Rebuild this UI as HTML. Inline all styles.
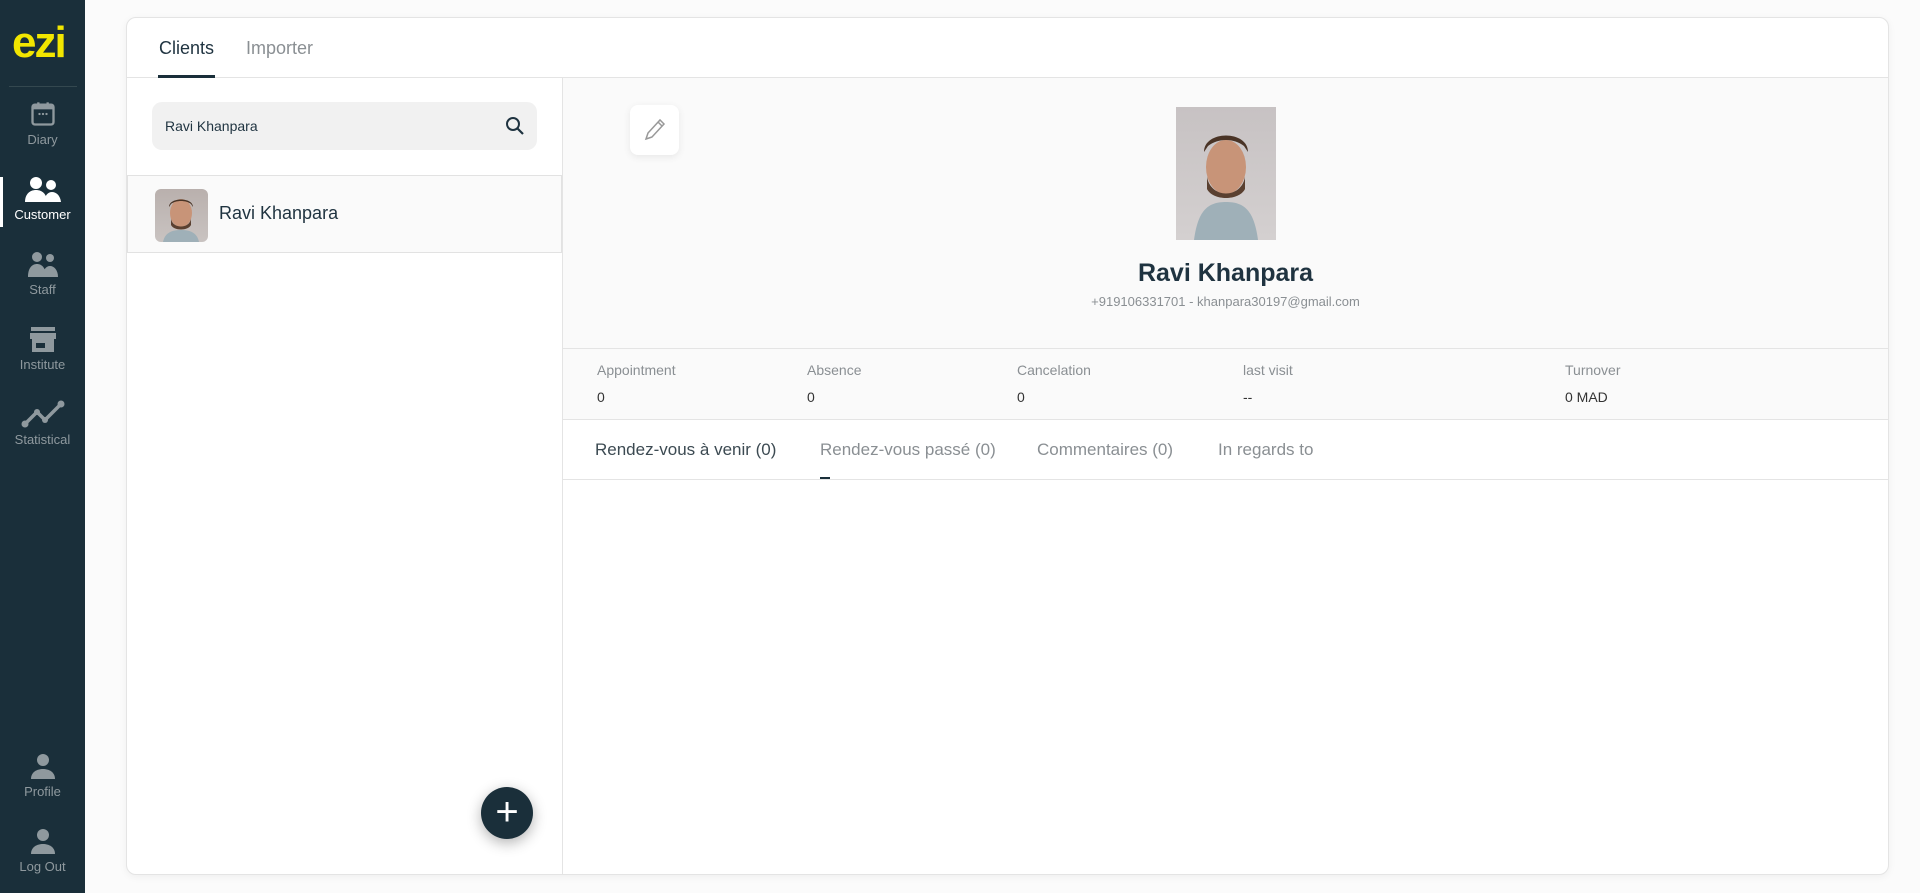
<!DOCTYPE html>
<html><head><meta charset="utf-8"><style>
*{box-sizing:border-box;margin:0;padding:0}
body{width:1920px;height:893px;background:#fbfbfb;font-family:"Liberation Sans",sans-serif;position:relative;overflow:hidden;color:#1f3340}
.sb{position:absolute;left:0;top:0;width:85px;height:893px;background:#1a2f3a}
.logo{position:absolute;left:12px;top:18px;font-size:44px;font-weight:bold;color:#f2e600;letter-spacing:-2px}
.div{position:absolute;left:9px;top:86px;width:68px;height:1px;background:#34484f}
.it{position:absolute;left:0;width:85px;text-align:center;color:#8f999e;font-size:13px}
.it svg{display:block;margin:0 auto 4px}
.act{color:#fff}
.bar{position:absolute;left:0;top:177px;width:3px;height:50px;background:#fff}
.card{position:absolute;left:126px;top:17px;width:1763px;height:858px;background:#fff;border:1px solid #e4e4e4;border-radius:10px;box-shadow:0 2px 8px rgba(0,0,0,.05);overflow:hidden}
.tabs{position:absolute;left:0;top:0;width:100%;height:60px;border-bottom:1px solid #e4e4e4}
.t{position:absolute;top:20px;font-size:18px}
.leftp{position:absolute;left:0;top:60px;width:436px;height:798px;border-right:1px solid #e4e4e4}
.search{position:absolute;left:25px;top:24px;width:385px;height:48px;background:#f1f1f1;border-radius:10px;font-size:14px;padding:16px 0 0 13px}
.row{position:absolute;left:0;top:97px;width:435px;height:78px;background:#fafafa;border:1px solid #e2e2e2}
.av{position:absolute;left:27px;top:13px;width:53px;height:53px;border-radius:6px;background:linear-gradient(#b9b0ad,#c9c3c1);overflow:hidden}
.fab{position:absolute;left:354px;top:709px;width:52px;height:52px;border-radius:50%;background:#1a2f3a;box-shadow:0 4px 14px rgba(0,0,0,.3);color:#fff;font-size:40px;text-align:center;line-height:50px}
.det{position:absolute;left:436px;top:60px;right:0;height:271px;background:#fafafa;border-bottom:1px solid #e4e4e4}
.stats{position:absolute;left:436px;top:331px;right:0;height:71px;background:#fafafa;border-bottom:1px solid #e4e4e4}
.lab{position:absolute;top:13px;font-size:14px;color:#8a8f93}
.val{position:absolute;top:40px;font-size:14px;color:#333}
.rt{position:absolute;top:422px;font-size:17px;color:#8a8f93}
</style></head><body>
<div class="sb">
<div class="logo">ezi</div><div class="div"></div>
<div class="it" style="top:100px"><svg width="28" height="28" viewBox="0 0 24 24"><rect x="3" y="4" width="18" height="17" rx="2" fill="none" stroke="#8f999e" stroke-width="2"/><rect x="3" y="4" width="18" height="4" fill="#8f999e"/><rect x="7" y="2" width="2" height="4" fill="#8f999e"/><rect x="15" y="2" width="2" height="4" fill="#8f999e"/><circle cx="9" cy="12" r="1" fill="#8f999e"/><circle cx="12" cy="12" r="1" fill="#8f999e"/><circle cx="15" cy="12" r="1" fill="#8f999e"/></svg>Diary</div>
<div class="bar"></div>
<div class="it act" style="top:175px"><svg width="38" height="28" viewBox="0 0 38 28"><circle cx="12" cy="8" r="6" fill="#fff"/><path d="M1 27c0-8 5-12 11-12s11 4 11 12z" fill="#fff"/><circle cx="27" cy="10" r="5" fill="#fff"/><path d="M20 27c1-7 4-10 8-10s8 3 9 10z" fill="#fff"/></svg>Customer</div>
<div class="it" style="top:250px"><svg width="34" height="28" viewBox="0 0 34 28"><circle cx="11" cy="7" r="5" fill="#8f999e"/><circle cx="24" cy="8" r="4" fill="#8f999e"/><path d="M2 27c0-9 4-13 9-13s9 4 9 13zM16 27c1-7 4-11 8-11s8 4 8 11z" fill="#8f999e"/></svg>Staff</div>
<div class="it" style="top:325px"><svg width="30" height="28" viewBox="0 0 30 28"><rect x="3" y="2" width="24" height="4" fill="#8f999e"/><path d="M2 8h26v6H2z" fill="#8f999e"/><path d="M4 14h22v13H4z" fill="#8f999e"/><rect x="8" y="18" width="9" height="5" fill="#1a2f3a"/></svg>Institute</div>
<div class="it" style="top:398px"><svg width="44" height="30" viewBox="0 0 44 30"><path d="M4 26l12-12 8 8 16-16" fill="none" stroke="#8f999e" stroke-width="3.5"/><circle cx="4" cy="26" r="3.5" fill="#8f999e"/><circle cx="40" cy="6" r="3.5" fill="#8f999e"/><circle cx="16" cy="14" r="3" fill="#8f999e"/><circle cx="24" cy="22" r="3" fill="#8f999e"/></svg>Statistical</div>
<div class="it" style="top:752px"><svg width="28" height="28" viewBox="0 0 28 28"><circle cx="14" cy="8" r="6" fill="#8f999e"/><path d="M2 27c0-7 6-10 12-10s12 3 12 10z" fill="#8f999e"/></svg>Profile</div>
<div class="it" style="top:827px"><svg width="28" height="28" viewBox="0 0 28 28"><circle cx="14" cy="8" r="6" fill="#8f999e"/><path d="M2 27c0-7 6-10 12-10s12 3 12 10z" fill="#8f999e"/></svg>Log Out</div>
</div>
<div class="card">
<div class="tabs"><div class="t" style="left:32px;color:#1f3340">Clients</div><div style="position:absolute;left:31px;top:57px;width:57px;height:3px;background:#1a2f3a"></div><div class="t" style="left:119px;color:#8a8f93">Importer</div></div>
<div class="leftp">
<div class="search">Ravi Khanpara<svg style="position:absolute;right:12px;top:14px" width="20" height="20" viewBox="0 0 20 20"><circle cx="8" cy="8" r="6" fill="none" stroke="#1f3340" stroke-width="2"/><path d="M12.5 12.5l5.5 5.5" stroke="#1f3340" stroke-width="2.2"/></svg></div>
<div class="row"><div class="av"><svg width="53" height="53" viewBox="0 0 53 53"><ellipse cx="26" cy="24" rx="11" ry="14" fill="#c89478"/><path d="M14 18c0-10 24-10 24 0l-2-3c-5-4-15-4-20 0z" fill="#4a3426"/><path d="M16 30c2 10 18 10 20 0v6c-3 6-17 6-20 0z" fill="#5a4030"/><path d="M8 53c2-10 10-12 18-12s16 2 18 12z" fill="#9fb0b8"/></svg></div><div style="position:absolute;left:91px;top:27px;font-size:18px">Ravi Khanpara</div></div>
<div class="fab">+</div>
</div>
<div class="det">
<div style="position:absolute;left:67px;top:27px;width:49px;height:50px;background:#fff;border-radius:8px;box-shadow:0 2px 8px rgba(0,0,0,.08)"><svg style="position:absolute;left:13px;top:12px" width="24" height="26" viewBox="0 0 24 26"><path d="M3 22l2-6L17 3l4 4L9 20z M15 5l4 4 M3 22l6-2" fill="none" stroke="#999" stroke-width="1.5"/></svg></div>
<div style="position:absolute;left:613px;top:29px;width:100px;height:133px;background:linear-gradient(#c7c2c3,#d4d0d0)"><svg width="100" height="133" viewBox="0 0 100 133"><path d="M18 133c4-30 14-38 32-38s28 8 32 38z" fill="#9fb0b8"/><ellipse cx="50" cy="60" rx="20" ry="27" fill="#c89478"/><path d="M28 45c0-22 44-22 44 0l-4-6c-10-8-26-8-36 0z" fill="#4a3426"/><path d="M31 70c4 22 34 22 38 0v12c-6 12-32 12-38 0z" fill="#5a4030"/></svg></div>
<div style="position:absolute;left:0;right:0;top:181px;text-align:center;font-size:25px;font-weight:bold;color:#1f3340">Ravi Khanpara</div>
<div style="position:absolute;left:0;right:0;top:216px;text-align:center;font-size:13px;color:#8a8f93">+919106331701 - khanpara30197@gmail.com</div>
</div>
<div class="stats">
<div class="lab" style="left:34px">Appointment</div><div class="val" style="left:34px">0</div>
<div class="lab" style="left:244px">Absence</div><div class="val" style="left:244px">0</div>
<div class="lab" style="left:454px">Cancelation</div><div class="val" style="left:454px">0</div>
<div class="lab" style="left:680px">last visit</div><div class="val" style="left:680px">--</div>
<div class="lab" style="left:1002px">Turnover</div><div class="val" style="left:1002px">0 MAD</div>
</div>
<div class="rt" style="left:468px;color:#3c4a52">Rendez-vous à venir (0)</div>
<div class="rt" style="left:693px">Rendez-vous passé (0)</div>
<div style="position:absolute;left:693px;top:459px;width:10px;height:3px;background:#1a2f3a"></div>
<div class="rt" style="left:910px">Commentaires (0)</div>
<div class="rt" style="left:1091px">In regards to</div>
<div style="position:absolute;left:436px;top:461px;right:0;height:1px;background:#e4e4e4"></div>
</div>
</body></html>
